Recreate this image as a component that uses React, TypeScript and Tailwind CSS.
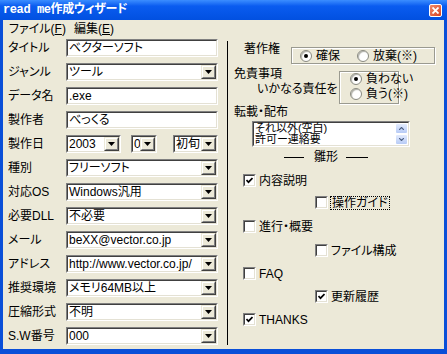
const outer = "border border-t-[#808080] border-l-[#808080] border-b-white border-r-white";
const inner = "border border-t-[#404040] border-l-[#404040] border-b-[#e4e1d4] border-r-[#e4e1d4]";

/* ===== petits contrôles "classiques" ===== */
function DropBtn() {
  return (
    <div className="w-[15px] h-full shrink-0 bg-[#ece9d8] border border-t-[#ece9d8] border-l-[#ece9d8] border-b-[#404040] border-r-[#404040]">
      <div className="w-full h-full border border-t-white border-l-white border-b-[#808080] border-r-[#808080] flex items-center justify-center">
        <svg width="7" height="4" viewBox="0 0 7 4">
          <path d="M0 0h7L3.5 4z" fill="black" />
        </svg>
      </div>
    </div>
  );
}

function Field({ value, combo, w = "w-[152px]" }: { value: string; combo?: boolean; w?: string }) {
  return (
    <div className={`h-[18px] shrink-0 ${w} ${outer}`}>
      <div className={`h-full ${inner} bg-white flex items-center`}>
        <span className="flex-1 min-w-0 overflow-hidden whitespace-nowrap pl-[1px] leading-[14px]">{value}</span>
        {combo && <DropBtn />}
      </div>
    </div>
  );
}

function Radio({ checked }: { checked?: boolean }) {
  return (
    <div className="w-[12px] h-[12px] shrink-0 rounded-full bg-white border border-[#8a8a80] shadow-[inset_1px_1px_1px_#b0b0a8] flex items-center justify-center">
      {checked && <div className="w-[4px] h-[4px] rounded-full bg-black" />}
    </div>
  );
}

function Check({ checked }: { checked?: boolean }) {
  return (
    <div className={`w-[13px] h-[13px] shrink-0 ${outer}`}>
      <div className={`w-full h-full ${inner} bg-white flex items-center justify-center`}>
        {checked && (
          <svg width="7" height="7" viewBox="0 0 7 7">
            <path d="M0.5 3 L2.5 5.2 L6.5 1" stroke="black" strokeWidth="1.7" fill="none" />
          </svg>
        )}
      </div>
    </div>
  );
}

function CheckRow({ label, checked, indent, mt, focus }: { label: string; checked?: boolean; indent: string; mt: string; focus?: boolean }) {
  return (
    <div className={`h-[13px] flex items-center ${indent} ${mt}`}>
      <Check checked={checked} />
      <span className={`ml-[3px] leading-[12px] ${focus ? "outline outline-1 outline-dotted outline-black px-[1px]" : ""}`}>{label}</span>
    </div>
  );
}

function ScrollBtn({ up }: { up?: boolean }) {
  return (
    <div className="h-[11px] rounded-[2px] border border-white bg-linear-to-b from-[#e3ebfd] to-[#b7cbf6] flex items-center justify-center">
      <svg width="5" height="3" viewBox="0 0 5 3">
        <path d={up ? "M0 3L2.5 0.5L5 3" : "M0 0L2.5 2.5L5 0"} stroke="#4d6185" strokeWidth="1.2" fill="none" />
      </svg>
    </div>
  );
}

const rows: { label: string; value?: string; combo?: boolean }[] = [
  { label: "タイトル", value: "ベクターソフト" },
  { label: "ジャンル", value: "ツール", combo: true },
  { label: "データ名", value: ".exe" },
  { label: "製作者", value: "べっくる" },
  { label: "製作日" },
  { label: "種別", value: "フリーソフト", combo: true },
  { label: "対応OS", value: "Windows汎用", combo: true },
  { label: "必要DLL", value: "不必要", combo: true },
  { label: "メール", value: "beXX@vector.co.jp", combo: true },
  { label: "アドレス", value: "http://www.vector.co.jp/", combo: true },
  { label: "推奨環境", value: "メモリ64MB以上", combo: true },
  { label: "圧縮形式", value: "不明", combo: true },
  { label: "S.W番号", value: "000", combo: true },
];

export default function App() {
  return (
    <div className="w-[447px] h-[354px] flex flex-col bg-[#0a4fd8] overflow-hidden text-[12px] text-black leading-none font-['Liberation_Sans','Noto_Sans_CJK_JP',sans-serif] [font-feature-settings:'palt']">
      {/* barre de titre */}
      <div className="h-[20px] shrink-0 flex items-center pl-[3px] pr-[5px] bg-linear-to-b from-[#3b8dff] via-[#0a5cf0] via-30% to-[#0250e0]">
        <span className="text-white font-bold text-[12px] font-['Liberation_Mono','Noto_Sans_CJK_JP',monospace] tracking-[-0.4px]">
          read me作成ウィザード
        </span>
        <div className="ml-auto w-[13px] h-[13px] rounded-[2px] border border-white bg-linear-to-br from-[#f08a6a] to-[#d8401c] flex items-center justify-center">
          <svg width="7" height="7" viewBox="0 0 7 7">
            <path d="M0.5 0.5L6.5 6.5M6.5 0.5L0.5 6.5" stroke="white" strokeWidth="1.8" />
          </svg>
        </div>
      </div>

      {/* zone client */}
      <div className="flex-1 mx-[3px] mb-[5px] bg-[#ece9d8] flex flex-col">
        {/* menu */}
        <div className="h-[18px] shrink-0 flex items-center pl-[6px]">
          <span className="w-[63px]">
            ファイル(<span className="underline">F</span>)
          </span>
          <span className="ml-[2px]">
            編集(<span className="underline">E</span>)
          </span>
        </div>

        <div className="flex-1 flex">
          {/* colonne gauche */}
          <div className="w-[224px] shrink-0 flex flex-col gap-[6px] pt-[1px]">
            {rows.map((r) =>
              r.label === "製作日" ? (
                <div key={r.label} className="h-[18px] flex items-center">
                  <span className="w-[63px] pl-[5px]">{r.label}</span>
                  <Field value="2003" combo w="w-[55px]" />
                  <div className="ml-[10px]">
                    <Field value="05" combo w="w-[26px]" />
                  </div>
                  <div className="ml-[16px]">
                    <Field value="初旬" combo w="w-[45px]" />
                  </div>
                </div>
              ) : (
                <div key={r.label} className="h-[18px] flex items-center">
                  <span className="w-[63px] pl-[5px] whitespace-nowrap">{r.label}</span>
                  <Field value={r.value ?? ""} combo={r.combo} />
                </div>
              )
            )}
          </div>

          {/* colonne droite */}
          <div className="flex-1 mt-[3px] mb-[4px] border-l border-black flex flex-col">
            <div className="mt-[2px] flex items-start">
              <span className="w-[63px] pl-[16px] leading-[12px]">著作権</span>
              <div className="mt-[4px] w-[144px] h-[17px] border border-[#9a9a90] shadow-[inset_1px_1px_0_white,1px_1px_0_white] flex items-center">
                <div className="ml-[8px]">
                  <Radio checked />
                </div>
                <span className="ml-[4px]">確保</span>
                <div className="ml-[17px]">
                  <Radio />
                </div>
                <span className="ml-[4px]">放棄(※)</span>
              </div>
            </div>

            <div className="mt-[4px] flex items-start">
              <div className="w-[111px] pl-[6px] flex flex-col">
                <span className="leading-[12px]">免責事項</span>
                <span className="mt-[3px] pl-[23px] leading-[12px] whitespace-nowrap">いかなる責任を</span>
              </div>
              <div className="mt-[3px] w-[60px] h-[33px] border border-[#9a9a90] shadow-[inset_1px_1px_0_white,1px_1px_0_white] flex flex-col">
                <div className="mt-[1px] h-[12px] flex items-center pl-[10px]">
                  <Radio checked />
                  <span className="ml-[4px] whitespace-nowrap">負わない</span>
                </div>
                <div className="mt-[3px] h-[12px] flex items-center pl-[10px]">
                  <Radio />
                  <span className="ml-[4px] whitespace-nowrap">負う(※)</span>
                </div>
              </div>
            </div>

            <span className="mt-[2px] pl-[6px] leading-[12px]">転載・配布</span>

            <div className={`mt-[3px] ml-[24px] w-[158px] h-[26px] ${outer}`}>
              <div className={`h-full ${inner} bg-white flex`}>
                <div className="flex-1 pl-[1px] flex flex-col text-[11px] leading-[11px]">
                  <span>それ以外(空白)</span>
                  <span>許可ー連絡要</span>
                </div>
                <div className="w-[13px] flex flex-col">
                  <ScrollBtn up />
                  <ScrollBtn />
                </div>
              </div>
            </div>

            <div className="mt-[4px] h-[12px] flex items-center">
              <div className="ml-[56px] w-[20px] h-px bg-black" />
              <span className="ml-[10px]">雛形</span>
              <div className="ml-[8px] w-[22px] h-px bg-black" />
            </div>

            <CheckRow label="内容説明" checked indent="pl-[15px]" mt="mt-[11px]" />
            <CheckRow label="操作ガイド" indent="pl-[87px]" mt="mt-[9px]" focus />
            <CheckRow label="進行・概要" indent="pl-[15px]" mt="mt-[11px]" />
            <CheckRow label="ファイル構成" indent="pl-[87px]" mt="mt-[11px]" />
            <CheckRow label="FAQ" indent="pl-[15px]" mt="mt-[10px]" />
            <CheckRow label="更新履歴" checked indent="pl-[87px]" mt="mt-[10px]" />
            <CheckRow label="THANKS" checked indent="pl-[15px]" mt="mt-[10px]" />
          </div>
        </div>
      </div>
    </div>
  );
}
